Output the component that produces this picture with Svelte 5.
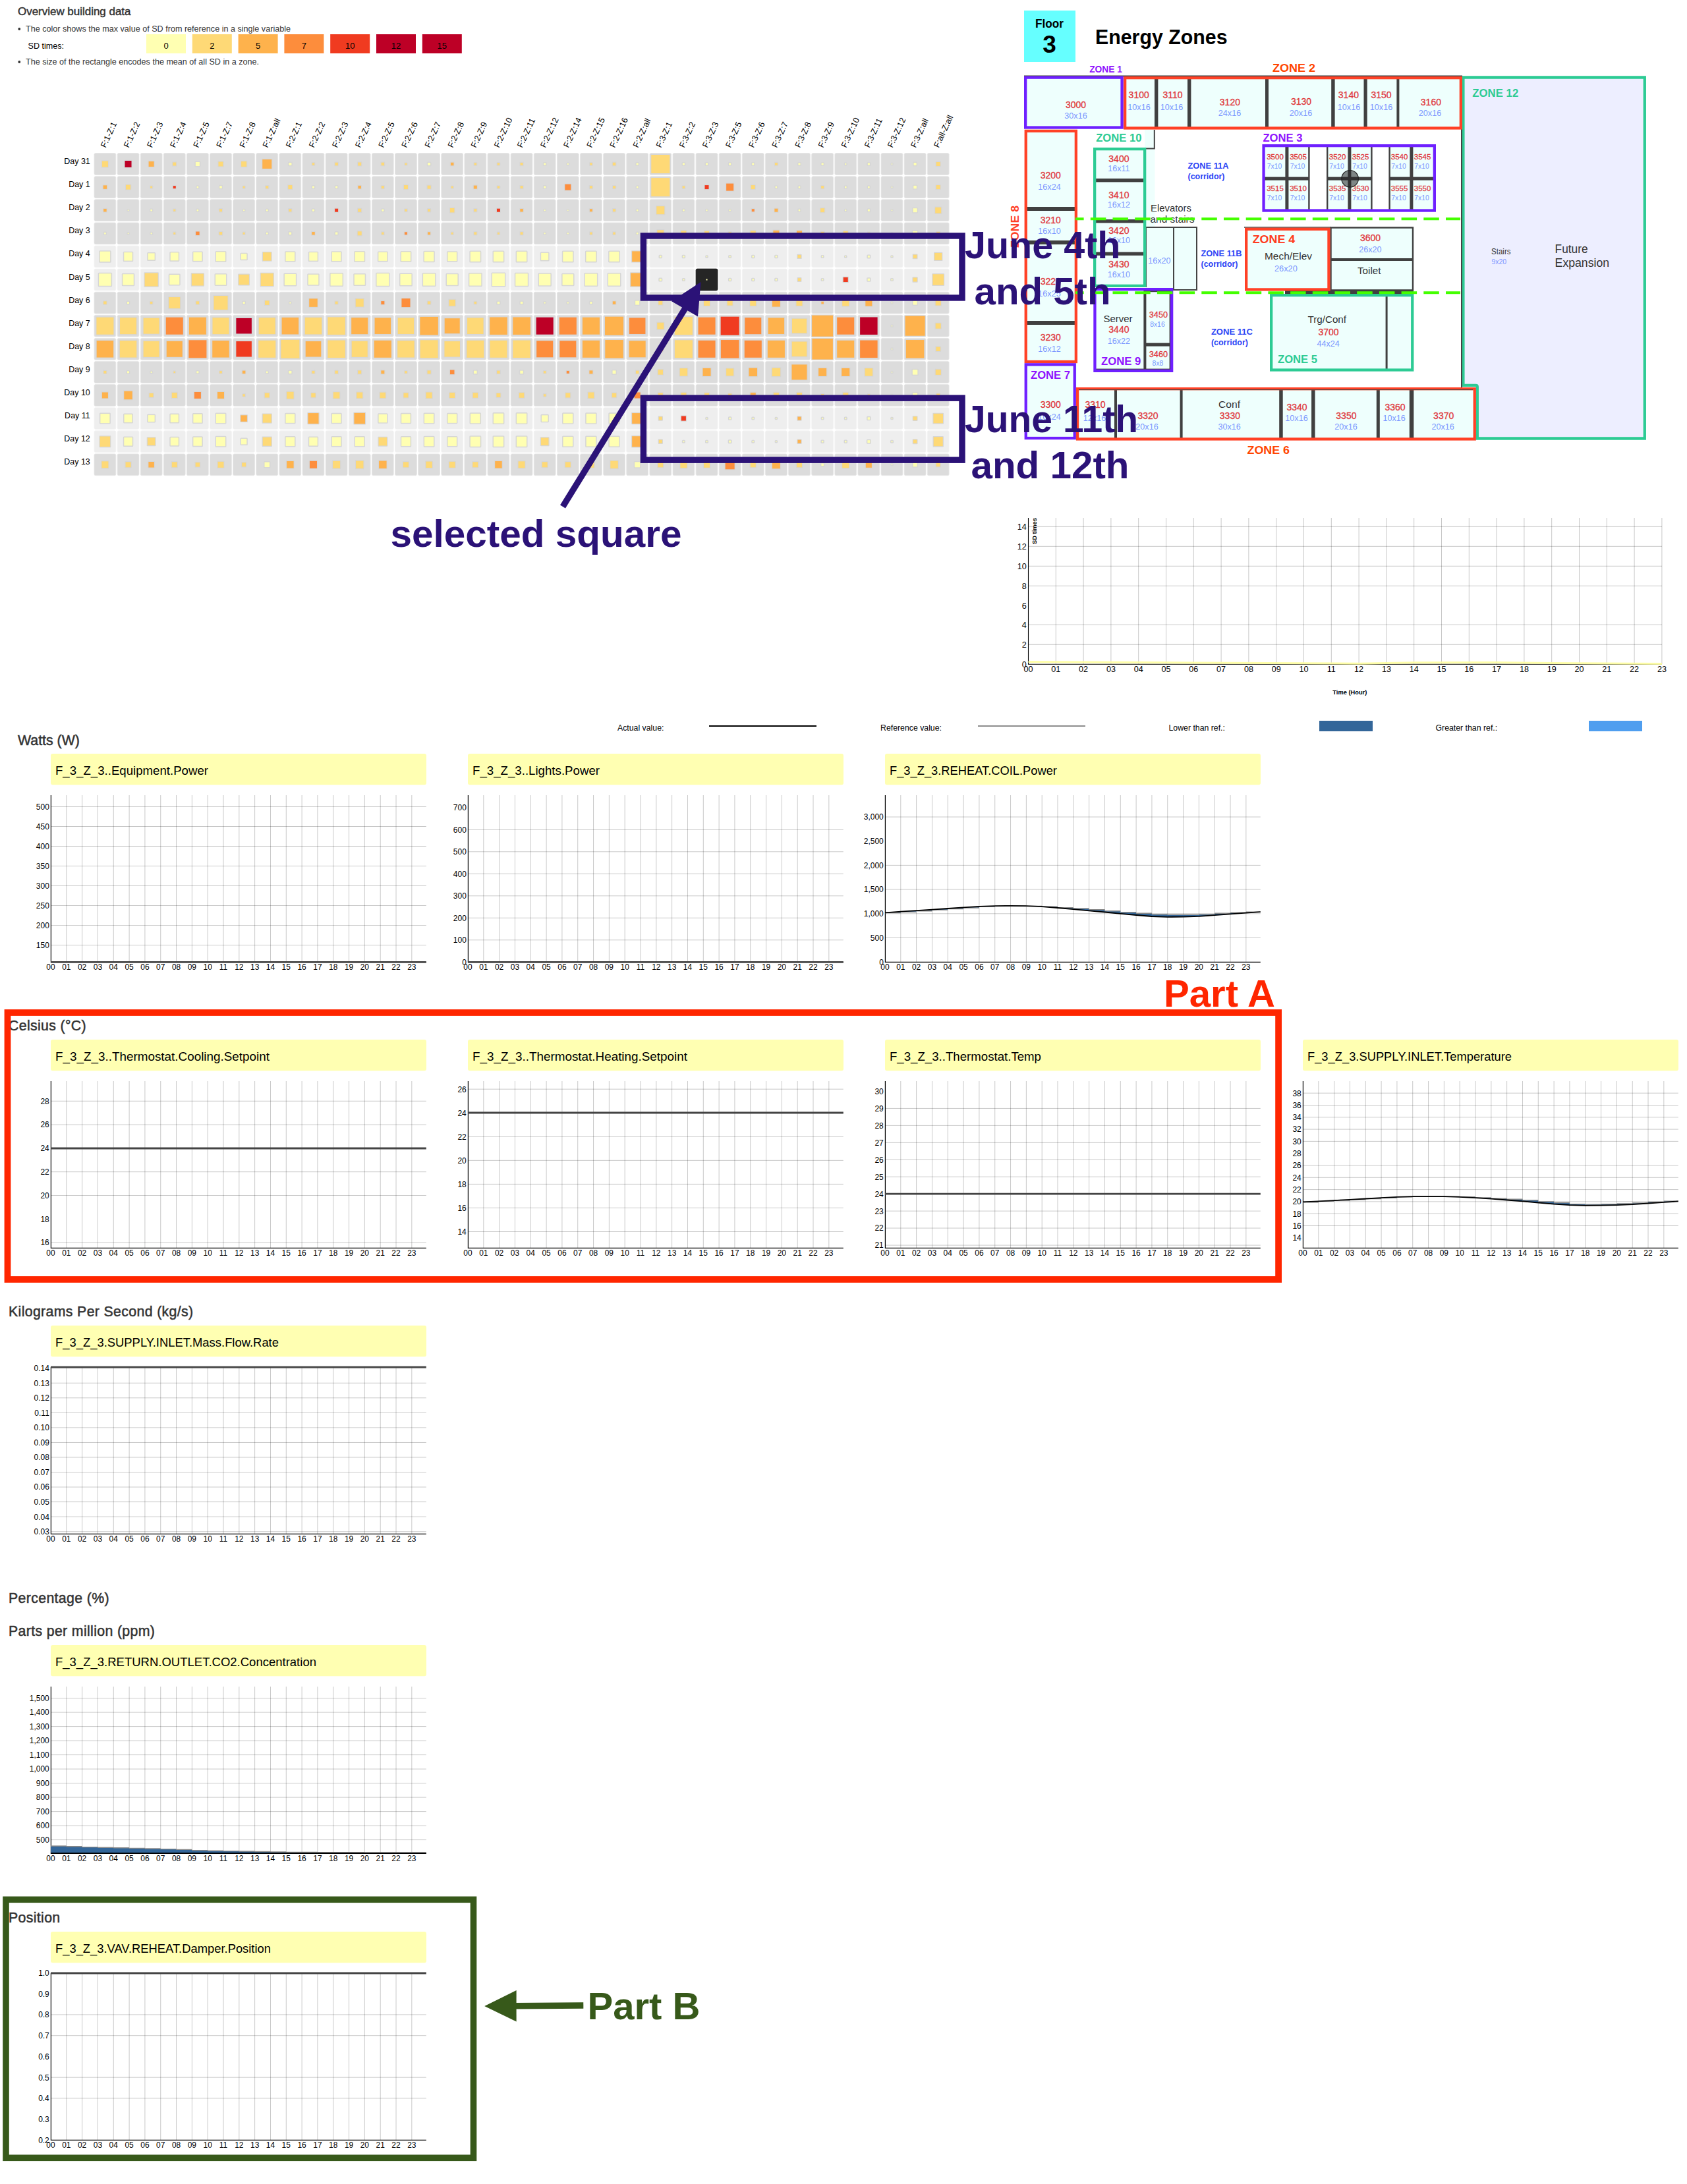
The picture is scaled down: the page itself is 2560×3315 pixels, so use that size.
<script>
  // Colour scale for SD values, lightest to darkest.
  const scale = ['#ffffb2', '#fed976', '#feb24c', '#fd8d3c', '#f03b20', '#bd0026', '#bd0026'];
  const scaleLabels = ['0', '2', '5', '7', '10', '12', '15'];

  const zones = [
    ...['1', '2', '3', '4', '5', '7', '8', 'all'].map((z) => `F:1-Z:${z}`),
    ...['1', '2', '3', '4', '5', '6', '7', '8', '9', '10', '11', '12', '14', '15', '16', 'all'].map((z) => `F:2-Z:${z}`),
    ...['1', '2', '3', '5', '6', '7', '8', '9', '10', '11', '12', 'all'].map((z) => `F:3-Z:${z}`),
    'F:all-Z:all'
  ];

  // Each entry is size:colourIndex, one per zone.
  const days = [
    ['Day 31', '9:1 10:5 8:2 5:1 6:0 7:1 8:1 14:2 4:0 3.5:1 4.5:1 5:1 4.5:1 3:1 4:0 4.5:2 3.5:1 3.5:1 4:1 3:0 2:0 3.5:1 4.5:1 3:0 28:1 3:0 3:0 3:0 3:0 4:1 3:0 3:0 2:0 3:0 1.5:0 4:0 6:1'],
    ['Day 1', '5.5:2 7:1 3:1 4:4 2.5:0 3.5:0 3:1 4:1 6:1 3:0 3:0 4.5:2 4:1 6:1 5:1 3:1 5:2 3.5:1 4:1 3:0 9:3 4:1 4:1 2.5:0 28:1 3.5:1 6:4 11:3 6:1 2.5:0 2.5:0 4:1 2.5:0 2.5:0 1.5:0 4.5:0 6:1'],
    ['Day 2', '4.5:2 1.5:0 2.5:0 3:1 2.5:0 4:1 2:0 2.5:0 4:1 3:0 5:4 5:1 3:0 3.5:1 4:1 6.5:1 4:1 5:4 4.5:2 2:0 1.5:0 4:2 4:1 2.5:0 12:1 2.5:0 2:0 2:0 4:3 5:2 2.5:0 6:1 2:0 3:0 1.5:0 6:0 9:1'],
    ['Day 3', '2.5:0 1.5:0 2:0 3:1 5.5:3 4.5:1 3:1 2.5:0 3.5:0 4.5:2 3.5:0 6:1 3.5:1 4:3 4:2 3:1 4:1 3:1 4:1 2:0 2:0 3.5:1 3.5:1 2.5:0 10:1 8:1 7:1 4:1 8:1 9:2 8:2 5:1 7:1 3:1 1.5:0 7:0 5:1'],
    ['Day 4', '15.5:0 12.5:0 10:0 12:0 13:0 14:0 8.5:0 12.5:1 13.5:0 12.5:0 13.5:0 14:0 13:0 14:0 14.5:0 13.5:0 15:0 15:0 15:0 11:0 15:0 15:0 15:0 16:2 2.5:0 2.5:0 1.5:0 2:0 2.5:0 2.5:0 5:1 2:0 1.5:0 3:0 1.5:0 5.5:1 11:1'],
    ['Day 5', '18.5:0 16.5:0 20:1 15:0 18:1 16:0 15.5:1 19:1 17:0 15.5:0 18:0 16:0 18.5:0 17:0 18:0 16.5:0 18:0 19:0 18.5:0 17.5:0 16.5:0 18:0 18:0 20:2 3:0 2:0 2:0 2.5:0 2.5:0 2.5:0 4.5:1 2:0 7:4 3.5:0 2:0 6:1 16.5:1'],
    ['Day 6', '4.5:1 3:0 3.5:1 17:1 4.5:1 21:1 3:0 6.5:1 2:0 12.5:2 4:1 12:1 5:3 13:3 4.5:1 9.5:1 3.5:1 3.5:0 3.5:0 2:0 2:0 3:0 4.5:2 6:0 6:1 6:1 9:1 8:1 9:1 12:2 9:1 3.5:2 10:1 10:2 1.5:0 6:0 8:1'],
    ['Day 7', '26:1 25:1 24:1 26:3 26:2 25:1 23.5:5 25:1 25.5:2 25.5:1 26.5:1 25:2 24.5:2 24.5:1 27.5:2 23:2 24.5:1 26.5:2 26.5:2 26:5 26:3 26:2 28:2 24.5:3 10:1 27:1 26:3 28:4 25:3 24.5:2 22:1 32:2 26:3 26.5:5 1.5:0 30:2 8:1'],
    ['Day 8', '25.5:2 25.5:1 24:1 24:2 27:3 25.5:2 23.5:4 26:1 28:1 23.5:2 26.5:1 24:1 26:2 25.5:1 27:1 23.5:1 26:1 26:1 26.5:1 25:3 25:3 26:2 27.5:2 25:2 7:2 27:1 26:3 27.5:3 26:3 26:2 22.5:1 31.5:2 26:2 26.5:3 1.5:0 27.5:2 6.5:1'],
    ['Day 9', '4:1 3:0 2:0 2.5:1 3:0 3.5:1 4.5:2 2.5:0 4:0 4:1 4.5:1 5:1 5:2 3.5:1 5:1 6.5:3 4.5:0 4.5:1 4.5:0 3.5:1 4:3 5:2 5:0 4.5:1 7.5:1 11.5:1 12:2 11:1 12.5:2 12.5:1 23:2 12:2 12:2 11.5:1 1.5:0 7.5:0 8:1'],
    ['Day 10', '9:2 12.5:2 6:1 8:1 10:3 10:2 3.5:1 7:1 10.5:1 6.5:1 9.5:1 9:1 8.5:1 7:1 9:1 8:1 7.5:1 6:1 7.5:1 3.5:1 7:1 9:1 6.5:1 9:3 7:1 8:1 7:1 5:1 8:2 8:1 8:1 4:1 8:1 3:1 1.5:0 7:0 5:1'],
    ['Day 11', '14:0 12:0 10:0 12:0 13:0 14:0 9.5:2 13:1 13.5:0 16:2 13.5:0 16.5:2 12.5:0 13.5:0 14:0 13.5:0 14.5:0 15:0 15:0 9.5:0 14.5:0 14.5:0 14.5:0 16:2 5:1 7:4 1.5:0 2.5:0 2:0 1.5:0 5:2 2:0 2:0 3.5:0 1.5:0 5.5:1 14.5:1'],
    ['Day 12', '15.5:1 12.5:0 11.5:1 12:0 13:0 14:0 8.5:0 13:1 13.5:0 12.5:0 13.5:0 13.5:0 12.5:1 13.5:0 14:0 13.5:0 15:0 15:0 15:0 11.5:1 14.5:0 14.5:0 14.5:0 16:2 5:1 2:0 2:0 3:0 2:0 1.5:0 5:2 2.5:0 2.5:0 4:0 2:0 5.5:1 14:1'],
    ['Day 13', '10:1 8:1 8.5:2 8:1 6.5:1 9:1 6:1 7.5:0 10.5:2 11:3 11:1 11.5:1 11.5:2 8:1 9.5:1 9:1 8:1 10.5:2 10:1 8:1 8:1 9:1 11.5:1 8:0 8:1 10:1 9:1 14:3 8:1 12:2 8:1 3.5:0 10:1 9:2 1.5:0 6:0 6:1']
  ].map(([name, row]) => ({
    name,
    cells: row.split(' ').map((c) => {
      const [size, color] = c.split(':');
      return { size: +size, color: scale[+color] };
    })
  }));
  const weekend = [4, 5, 11, 12];
  const cx = (i) => 159.4 + i * 35.12;
  const cy = (i) => 249 + i * 35.1;

  // Floor plan: rooms as [number, x, y, size, x, y]
  const rooms = [
    ['3000', 1632.5, 164.3, '30x16', 1632.5, 180.3], ['3100', 1728.2, 149, '10x16', 1728.5, 167.3],
    ['3110', 1779.6, 149, '10x16', 1778, 167.3], ['3120', 1866.4, 160, '24x16', 1866, 176],
    ['3130', 1974.6, 159.4, '20x16', 1974, 176], ['3140', 2046.4, 149, '10x16', 2047, 167.3],
    ['3150', 2096, 149, '10x16', 2096, 167.3], ['3160', 2171.4, 160, '20x16', 2170, 176],
    ['3200', 1594.3, 270.7, '16x24', 1592.5, 287.7], ['3210', 1594.3, 338.7, '16x10', 1592.5, 355],
    ['3220', 1594.3, 432.3, '16x25', 1592.5, 450], ['3230', 1594.3, 516.7, '16x12', 1592.5, 533.7],
    ['3300', 1594.3, 618.7, '16x24', 1592.5, 637], ['3400', 1697.9, 245.7, '16x11', 1697.9, 260],
    ['3410', 1697.9, 301, '16x12', 1697.9, 315.3], ['3420', 1697.9, 355, '16x10', 1697.9, 369.3],
    ['3430', 1697.9, 405.7, '16x10', 1697.9, 420.7], ['3440', 1697.9, 504.7, '16x22', 1697.9, 521.7],
    ['3600', 2079.6, 366.3, '26x20', 2079.3, 383.3], ['3700', 2016, 509.3, '44x24', 2015.7, 525.7],
    ['3310', 1662, 619, '12x16', 1661, 638.7], ['3320', 1742, 635.7, '20x16', 1740.5, 652.3],
    ['3330', 1866.4, 636, '30x16', 1865.7, 652.3], ['3340', 1968, 623.3, '10x16', 1967.5, 639.3],
    ['3350', 2042.9, 635.5, '20x16', 2042.5, 652.3], ['3360', 2117, 623.3, '10x16', 2115.7, 639.3],
    ['3370', 2190.7, 636, '20x16', 2189.6, 652]
  ];
  const desks = [
    [1935, '3500', '3515'], [1970, '3505', '3510'], [2029.6, '3520', '3535'],
    [2064.6, '3525', '3530'], [2123.6, '3540', '3555'], [2158.6, '3545', '3550']
  ];
  // Walls as x, y, width, height
  const walls = [
    [1752, 119, 5.4, 75], [1802, 119, 5.4, 75], [1920, 119, 5, 75], [2020.2, 119, 5.4, 75], [2069.5, 119, 5.2, 75], [2119.4, 119, 4, 75],
    [1558, 314, 73, 6], [1558, 365, 73, 6], [1558, 487, 73, 6],
    [1662, 271, 74, 5.4], [1662, 333, 74, 5.4], [1662, 382.6, 74, 5.2],
    [1735.4, 440, 4, 122], [1739, 440.6, 37, 2.6], [1739, 520.6, 37, 5], [1774.6, 443, 1.5, 118], [1662, 559.6, 114, 1.5],
    [1950.4, 221, 5, 98], [1985.2, 221, 2.4, 98], [2013, 221, 2.4, 98], [2045.4, 221, 5, 98], [2080.2, 221, 2.4, 98],
    [2107.4, 221, 2.4, 98], [2139.4, 221, 5, 98],
    [1919, 268.6, 68, 5], [2014, 268.6, 68, 5], [2108, 268.6, 67, 5],
    [2102.6, 448, 3, 113],
    [1691, 591, 4, 74], [1790.6, 591, 4, 74], [1941.2, 591, 5.5, 74], [1990.4, 591, 5, 74], [2088.8, 591, 5, 74], [2138.8, 591, 6.5, 74],
    [1990.2, 591, 5, 74]
  ];
  // Outlined zones as x, y, width, height, colour (outer edges)
  const red = '#ff4126', violet = '#6f20ff', green = '#2dcb94';
  const outlines = [
    [1659, 224, 80.3, 212, green], [1915.4, 219, 263.6, 102.7, violet],
    [1889, 345.6, 129.6, 96, red], [1927, 446, 218.4, 117.7, green],
    [1659.3, 437, 121, 128, violet], [1554.6, 196.7, 80.4, 354.5, red], [1554.6, 551.2, 78.3, 116, violet],
    [1705, 116, 514, 80.6, red], [1554, 115.5, 150.7, 80.2, violet], [1632.9, 588, 607, 80.6, red]
  ];
  // label, x, baseline, width, font size, colour
  const zoneLabels = [
    ['ZONE 1', 1653.2, 110, 49.7, 14.5, '#9013fe'], ['ZONE 2', 1931, 109.3, 65, 17, '#ff4500'],
    ['ZONE 3', 1916.4, 215, 60, 16.6, '#9013fe'], ['ZONE 4', 1900.7, 369, 64.5, 17, '#ff3b20'],
    ['ZONE 5', 1939, 551, 60, 16.6, green], ['ZONE 6', 1892.5, 688.7, 64.5, 17, '#ff4500'],
    ['ZONE 7', 1564, 575, 60, 16.6, '#9013fe'], ['ZONE 9', 1671, 553.7, 60.4, 16.6, '#9013fe'],
    ['ZONE 10', 1663.2, 215, 69.3, 16.6, green], ['ZONE 12', 2234.3, 146.7, 70, 16.6, green],
    ['ZONE 11A', 1802.5, 256.3, 62, 12.7, '#2b44f5'], ['(corridor)', 1802.5, 272, 56, 12.7, '#2b44f5'],
    ['ZONE 11B', 1822.5, 388.7, 62, 12.7, '#2b44f5'], ['(corridor)', 1822.5, 404.7, 56, 12.7, '#2b44f5'],
    ['ZONE 11C', 1837.9, 508.3, 63, 12.7, '#2b44f5'], ['(corridor)', 1837.9, 524.3, 56, 12.7, '#2b44f5']
  ];
  const names = [
    ['Elevators', 1746, 320.7, 62, 15], ['and stairs', 1745.5, 338, 67, 15], ['Server', 1674.6, 488.7, 44, 15],
    ['Mech/Elev', 1919, 394.3, 72, 15], ['Toilet', 2060, 415.7, 35.5, 15], ['Trg/Conf', 1984.5, 490, 58.5, 15],
    ['Conf', 1849, 619.3, 33, 15], ['Stairs', 2263, 386.3, 29.5, 12], ['Future', 2359.6, 383.5, 50, 18], ['Expansion', 2359.6, 405.2, 82.5, 18]
  ];

  const hours = Array.from({ length: 24 }, (_, i) => String(i).padStart(2, '0'));
  const sdTicks = [[14, 799.3, 1], [12, 829.3, 1], [10, 859.3, 1], [8, 889.3, 1], [6, 919, 0], [4, 948.3, 1], [2, 978.3, 1], [0, 1008.3, 0]];
  const sdX = (h) => 1560.5 + h * 41.8;

  const hx = (h) => 50 + h * 23.82;
  // Builds tick marks from a first label, its y, and a fixed step.
  const ticks = (labels, y0, step, skip = []) =>
    labels.split(' ').map((label, i) => ({ label, y: y0 + i * step, line: !skip.includes(label) }));

  const reheatActual = [469, 466, 463, 460, 457, 454, 451, 449.6, 449, 449.7, 451.5, 455, 459, 463.5, 467.5, 472, 476, 480, 481.5, 481.2, 479.5, 476.5, 473, 469.5, 467].map((v) => v / 1.912 - 4);
  const reheatRef = [469.5, 467, 464, 461, 458, 455, 451.5, 450, 449.4, 450, 451.5, 454.5, 457, 460.5, 464, 468, 471, 474, 475, 475, 474, 471, 469, 467].map((v) => v / 1.912 - 4);
  const supplyActual = [1309, 1307, 1304.5, 1302, 1299.5, 1297, 1294.5, 1293.3, 1293, 1293.2, 1294.5, 1297, 1300, 1303.5, 1307, 1311, 1315, 1318, 1319.2, 1319, 1318, 1316, 1313, 1310, 1307].map((v) => v / 1.912 - 438.2);
  const supplyRef = [1309.5, 1307, 1304.5, 1302, 1299.5, 1297, 1294.5, 1293.5, 1293, 1293.2, 1294.5, 1296.5, 1299, 1301, 1304, 1308, 1311, 1315, 1316, 1315.5, 1314, 1312, 1309, 1306.5].map((v) => v / 1.912 - 438.2);
  const co2Ref = [305, 305.8, 306.6, 307.2, 307.8, 308.4, 309, 309.6, 310.4, 311.6, 312.2, 312.6, 313, 313.5, 314, 314.4, 314.5, 314.6, 314.7, 314.8, 314.9, 315, 315, 315];
  const co2Actual = Array(25).fill(315.9);

  const endX = (h) => hx(Math.min(h, 23.92));
  const linePath = (v) => 'M' + v.map((y, h) => `${endX(h)} ${y.toFixed(1)}`).join('L');
  const stepPath = (v) => v.map((y, h) => `M${endX(h)} ${y.toFixed(1)}H${endX(h + 1)}`).join('');
  const areaPath = (a, r) =>
    'M' + r.map((y, h) => `${endX(h)} ${y}L${endX(h + 1)} ${y}`).join('L') + 'L' + a.map((y, h) => `${endX(h)} ${y}`).reverse().join('L') + 'Z';

  const sections = [
    { unit: 'Watts (W)', first: true, charts: [
      { name: 'F_3_Z_3..Equipment.Power', w: 232, ticks: ticks('500 450 400 350 300 250 200 150', 80.5, 30), flat: 316.3 },
      { name: 'F_3_Z_3..Lights.Power', w: 193, ticks: ticks('700 600 500 400 300 200 100 0', 81.8, 33.5, ['700', '0']), flat: 316.3 },
      { name: 'F_3_Z_3.REHEAT.COIL.Power', w: 254, ticks: ticks('3,000 2,500 2,000 1,500 1,000 500 0', 96, 36.7, ['2,500', '0']), actual: reheatActual, ref: reheatRef }
    ] },
    { unit: 'Celsius (°C)', charts: [
      { name: 'F_3_Z_3..Thermostat.Cooling.Setpoint', w: 325, ticks: ticks('28 26 24 22 20 18 16', 93.3, 35.8, ['18']), flat: 165 },
      { name: 'F_3_Z_3..Thermostat.Heating.Setpoint', w: 326, ticks: ticks('26 24 22 20 18 16 14', 75.2, 36.05), flat: 111 },
      { name: 'F_3_Z_3..Thermostat.Temp', w: 230, ticks: ticks('30 29 28 27 26 25 24 23 22 21', 78.5, 25.95, ['30']), flat: 234.2 },
      { name: 'F_3_Z_3.SUPPLY.INLET.Temperature', w: 310, ticks: ticks('38 36 34 32 30 28 26 24 22 20 18 16 14', 81.2, 18.3, ['28', '14']), actual: supplyActual, ref: supplyRef }
    ] },
    { unit: 'Kilograms Per Second (kg/s)', charts: [
      { name: 'F_3_Z_3.SUPPLY.INLET.Mass.Flow.Rate', w: 339, ticks: ticks('0.14 0.13 0.12 0.11 0.10 0.09 0.08 0.07 0.06 0.05 0.04 0.03', 64.7, 22.55), flat: 63.2 }
    ] },
    { unit: 'Percentage (%)', charts: [] },
    { unit: 'Parts per million (ppm)', charts: [
      { name: 'F_3_Z_3.RETURN.OUTLET.CO2.Concentration', w: 396, ticks: ticks('1,500 1,400 1,300 1,200 1,100 1,000 900 800 700 600 500', 80.6, 21.5), actual: co2Actual, ref: co2Ref }
    ] },
    { unit: 'Position', charts: [
      { name: 'F_3_Z_3.VAV.REHEAT.Damper.Position', w: 327, ticks: ticks('1.0 0.9 0.8 0.7 0.6 0.5 0.4 0.3 0.2', 62.5, 31.73, ['0.9', '0.6', '0.3', '0.2']), flat: 63 }
    ] }
  ];
</script>

<main class="page">
  <div class="top">
    <svg class="overview" viewBox="0 0 1500 1090">
      <text class="head" x="27" y="23.3" font-size="16.5" textLength="171.5" lengthAdjust="spacingAndGlyphs">Overview building data</text>
      <circle cx="29.3" cy="44" r="1.9" fill="#333" />
      <text x="39" y="48" font-size="13" fill="#333" textLength="402" lengthAdjust="spacingAndGlyphs">The color shows the max value of SD from reference in a single variable</text>
      <text x="42.5" y="74" font-size="13.5" textLength="54.5" lengthAdjust="spacingAndGlyphs">SD times:</text>
      {#each scale as color, i}
        <rect x={222 + i * 69.8} y="52" width="60" height="29" fill={color} />
        <text x={252 + i * 69.8} y="74" font-size="13" text-anchor="middle">{scaleLabels[i]}</text>
      {/each}
      <circle cx="29.3" cy="94" r="1.9" fill="#333" />
      <text x="39" y="98" font-size="13" fill="#333" textLength="354" lengthAdjust="spacingAndGlyphs">The size of the rectangle encodes the mean of all SD in a zone.</text>

      {#each zones as zone, i}
        <text font-size="12.8" transform="translate({cx(i) + 0.8} 225) rotate(-65)">{zone}</text>
      {/each}
      {#each days as day, r}
        <text x="136.8" y={cy(r)} font-size="12.5" text-anchor="end">{day.name}</text>
        {#each day.cells as cell, c}
          {@const picked = r === 5 && c === 26}
          <rect x={cx(c) - 16.4} y={cy(r) - 16.4} width="32.8" height="32.8" rx="2"
            fill={picked ? '#252525' : weekend.includes(r) ? '#eeeeee' : '#dcdcdc'}
            stroke={picked ? '#111' : weekend.includes(r) ? '#f3f3f3' : '#e6e6e6'} stroke-width="0.8" />
        {/each}
      {/each}
      {#each days as day, r}
        {#each day.cells as cell, c}
          <rect x={cx(c) - cell.size / 2} y={cy(r) - cell.size / 2} width={cell.size} height={cell.size}
            fill={cell.color} stroke={r === 5 && c === 26 ? '#252525' : '#d6d6d6'}
            stroke-width={cell.color === '#ffffb2' ? 3 : 2.4} stroke-linejoin="round" paint-order="stroke" />
        {/each}
      {/each}
    </svg>

    <svg class="plan" viewBox="1500 0 1060 1090">
      <rect x="1554" y="16" width="78" height="78" fill="#66ffff" />
      <text class="b" x="1571" y="41.5" font-size="18" textLength="43" lengthAdjust="spacingAndGlyphs">Floor</text>
      <text class="b" x="1592.5" y="79.5" font-size="37" text-anchor="middle">3</text>
      <text class="b" x="1662" y="66.8" font-size="30.5" textLength="200.5" lengthAdjust="spacingAndGlyphs">Energy Zones</text>

      <g fill="#eefffd">
        <rect x="1554" y="116" width="665" height="80" />
        <rect x="1555" y="196" width="79" height="471" />
        <rect x="1659" y="224" width="80" height="212" />
        <rect x="1737" y="197" width="15.5" height="147" />
        <rect x="1739" y="345" width="77" height="95" />
        <rect x="1660" y="438" width="120" height="126" />
        <rect x="1917" y="221" width="70" height="98" />
        <rect x="2014" y="221" width="68" height="98" />
        <rect x="2108" y="221" width="68" height="98" />
        <rect x="1889" y="345" width="256" height="96" />
        <rect x="1927" y="446" width="218" height="117" />
        <rect x="1633" y="588" width="607" height="80" />
      </g>
      <path d="M2220.4 117.5H2495.8V665.5H2241.8V587Q2241.8 584.8 2239.6 584.8H2220.4Z" fill="#edeeff" stroke={green} stroke-width="4.3" />
      <path d="M1554 115.5H2219M2218 196V588M1751.8 197V225.6H1739M1739 345H1816V440H1781V345M1739 345V436" fill="none" stroke="#444" stroke-width="2" />
      <path d="M2019.5 345.5H2144V440.5H2019.5Z" fill="none" stroke="#404040" stroke-width="2.4" />
      <path d="M2019 394H2144" stroke="#404040" stroke-width="4" />
      <path d="M1888 345H2020" stroke="#404040" stroke-width="1.6" />
      <rect x="1950" y="440" width="195" height="6" fill="#404040" />
      {#each walls as [x, y, w, h]}
        <rect {x} {y} width={w} height={h} fill="#404040" />
      {/each}
      {#each outlines as [x, y, w, h, color]}
        <rect x={x + 2.15} y={y + 2.15} width={w - 4.3} height={h - 4.3} fill="none" stroke={color} stroke-width="4.3" />
      {/each}
      <path d="M1637 591.6H2235" stroke="#444" stroke-width="1" />

      {#each rooms as [num, x, y, dim, dx, dy]}
        <text {x} {y} class="num" font-size="14" text-anchor="middle">{num}</text>
        <text x={dx} y={dy} class="dim" font-size="12.6" text-anchor="middle">{dim}</text>
      {/each}
      {#each desks as [x, a, b]}
        <text {x} y="242.2" class="num" font-size="11.5" text-anchor="middle">{a}</text>
        <text x={x - 1} y="256.4" class="dim" font-size="10.4" text-anchor="middle">7x10</text>
        <text {x} y="290" class="num" font-size="11.5" text-anchor="middle">{b}</text>
        <text x={x - 1} y="304.2" class="dim" font-size="10.4" text-anchor="middle">7x10</text>
      {/each}
      <text x="1757.9" y="482.2" class="num" font-size="12.7" text-anchor="middle">3450</text>
      <text x="1756.4" y="496.4" class="dim" font-size="10.4" text-anchor="middle">8x16</text>
      <text x="1757.9" y="541.8" class="num" font-size="12.7" text-anchor="middle">3460</text>
      <text x="1757" y="554.8" class="dim" font-size="10.4" text-anchor="middle">8x8</text>
      <text x="1759.3" y="399.7" class="dim" font-size="12.6" text-anchor="middle">16x20</text>
      <text x="1951.4" y="412.4" class="dim" font-size="12.8" text-anchor="middle">26x20</text>
      <text x="2263.5" y="401.2" class="dim" font-size="10.4">9x20</text>
      {#each names as [label, x, y, w, size]}
        <text {x} {y} fill="#333" font-size={size} textLength={w} lengthAdjust="spacingAndGlyphs">{label}</text>
      {/each}
      {#each zoneLabels as [label, x, y, w, size, color]}
        <text class="b" {x} {y} font-size={size} fill={color} textLength={w} lengthAdjust="spacingAndGlyphs">{label}</text>
      {/each}
      <text class="b" font-size="17" fill={red} textLength="64" lengthAdjust="spacingAndGlyphs" transform="translate(1546 376) rotate(-90)">ZONE 8</text>
      <path d="M1632 332.3H2216M1632 444.3H2216" stroke="#44ff00" stroke-width="4" stroke-dasharray="23.5 10.2" stroke-dashoffset="10.9" />
      <circle cx="2048.6" cy="271.3" r="12.8" fill="#222" fill-opacity="0.55" stroke="#222" stroke-width="1.2" />

      {#each sdTicks as [label, y, line]}
        {#if line}<path class="grid" d="M1560.5 {y}H2522" />{/if}
        <text x="1557.8" y={y + 4.6} font-size="12.6" text-anchor="end">{label}</text>
      {/each}
      {#each hours as h, i}
        {#if i > 0}<path class="grid" d="M{sdX(i)} 786V1008" />{/if}
        <text x={sdX(i)} y="1020.2" font-size="12.6" text-anchor="middle">{h}</text>
      {/each}
      <path d="M1560.5 786V1008.3H2522" fill="none" stroke="#000" stroke-width="1.1" />
      <path d="M1560.5 1004.6L1811 1006L2062 1007.2L2146 1005.8L2271 1005.6L2355 1006.6L2522 1007.4" fill="none" stroke="#ffffa0" stroke-opacity="0.9" stroke-width="3" />
      <text class="b" font-size="9.3" textLength="40" lengthAdjust="spacingAndGlyphs" transform="translate(1573.4 826) rotate(-90)">SD times</text>
      <text class="b" x="2022.3" y="1053.6" font-size="9.6" textLength="52" lengthAdjust="spacingAndGlyphs">Time (Hour)</text>
    </svg>
  </div>

  <div class="legend">
    <div class="item actual"><span>Actual value:</span><i></i></div>
    <div class="item reference"><span>Reference value:</span><i></i></div>
    <div class="item lower"><span>Lower than ref.:</span><i></i></div>
    <div class="item greater"><span>Greater than ref.:</span><i></i></div>
  </div>

  {#each sections as section}
    <section class:first={section.first}>
      <h2>{section.unit}</h2>
      {#if section.charts.length}
        <div class="charts">
          {#each section.charts as chart}
            <svg class="chart" viewBox="0 0 633.2 340">
              <rect x="50" y="0" width="570" height="47.3" rx="3" fill="#ffffb2" />
              <text x="57" y="32" font-size="17.8" textLength={chart.w} lengthAdjust="spacingAndGlyphs">{chart.name}</text>
              {#each chart.ticks as t}
                {#if t.line}<path class="grid" d="M50 {t.y}H619.8" />{/if}
                <text x="47.8" y={t.y + 4.4} font-size="12" text-anchor="end">{t.label}</text>
              {/each}
              {#each hours as h, i}
                {#if i > 0}<path class="grid" d="M{hx(i)} 63V316" />{/if}
                <text x={hx(i)} y="328" font-size="12" text-anchor="middle">{h}</text>
              {/each}
              <path d="M50.4 63V316.3H619.8" fill="none" stroke="#000" stroke-width="1.2" />
              {#if chart.flat}
                <path d="M50 {chart.flat}H619.8" stroke="#444" stroke-width="2.8" />
              {:else}
                <path d={areaPath(chart.actual, chart.ref)} fill="#336699" />
                <path d={stepPath(chart.ref)} fill="none" stroke="#888" stroke-width="1.4" />
                <path d={linePath(chart.actual)} fill="none" stroke="#000" stroke-width="1.8" />
              {/if}
            </svg>
          {/each}
        </div>
      {/if}
    </section>
  {/each}

  <svg class="notes" viewBox="0 0 2560 3315">
    <g fill="none" stroke="#2b1277" stroke-width="9.4">
      <rect x="976.4" y="358" width="483.6" height="94" />
      <rect x="976.4" y="604.2" width="483.6" height="94" />
      <path d="M854 769L1041 466" />
    </g>
    <path d="M1063.5 428L1019 457.3L1059 480.5Z" fill="#2b1277" />
    <g class="b" fill="#2b1277" font-size="57">
      <text x="1464" y="392" textLength="236.5" lengthAdjust="spacingAndGlyphs">June 4th</text>
      <text x="1478.5" y="462" textLength="207" lengthAdjust="spacingAndGlyphs">and 5th</text>
      <text x="1464" y="655.7" textLength="263" lengthAdjust="spacingAndGlyphs">June 11th</text>
      <text x="1473.5" y="725.5" textLength="240" lengthAdjust="spacingAndGlyphs">and 12th</text>
      <text x="592.5" y="830" textLength="442" lengthAdjust="spacingAndGlyphs">selected square</text>
    </g>
    <rect x="11.5" y="1537" width="1928.6" height="405" fill="none" stroke="#ff2600" stroke-width="9.8" />
    <text class="b" x="1766" y="1528" font-size="57" fill="#ff2600" textLength="169" lengthAdjust="spacingAndGlyphs">Part A</text>
    <g stroke="#37591a" stroke-width="9.6" fill="none">
      <rect x="9" y="2883.3" width="709.5" height="392" />
      <path d="M780 3044.8L885.3 3044" />
    </g>
    <path d="M735.2 3045L783.6 3020.9V3068.5Z" fill="#37591a" />
    <text class="b" x="891.5" y="3064.6" font-size="57" fill="#37591a" textLength="171" lengthAdjust="spacingAndGlyphs">Part B</text>
  </svg>
</main>

<style>
  :global(body) {
    background: #fff;
  }
  .page {
    position: relative;
    width: 2560px;
    height: 3315px;
    overflow: hidden;
    font-family: 'Liberation Sans', Arial, sans-serif;
    color: #000;
  }
  svg {
    display: block;
    flex: none;
    overflow: visible;
  }
  .top {
    display: flex;
    height: 1090px;
  }
  .overview {
    width: 1500px;
    height: 1090px;
  }
  .plan {
    width: 1060px;
    height: 1090px;
  }
  .head {
    fill: #333;
    stroke: #333;
    stroke-width: 0.45px;
  }
  .b {
    font-weight: 700;
  }
  .num {
    fill: #e0393e;
    stroke: #e0393e;
    stroke-width: 0.3px;
  }
  .dim {
    fill: #7a96ff;
  }
  .grid {
    stroke: #000;
    stroke-opacity: 0.22;
    stroke-width: 1;
    fill: none;
  }
  .legend {
    display: flex;
    height: 25px;
    padding-left: 937px;
    font-size: 12.3px;
  }
  .item {
    display: flex;
  }
  .item span {
    line-height: 31px;
    white-space: nowrap;
  }
  .item i {
    margin-top: 4px;
    height: 16px;
    width: 81px;
  }
  .actual { width: 399px; }
  .actual span { width: 138.5px; }
  .reference { width: 437.5px; }
  .reference span { width: 148px; }
  .lower { width: 405px; }
  .lower span { width: 228.5px; }
  .greater span { width: 232.5px; }
  .actual i,
  .reference i {
    margin-top: 11px;
    width: 163px;
    height: 2px;
    background: #000;
  }
  .reference i { background: #8c8c8c; }
  .lower i { background: #336699; }
  .greater i { background: #4f9eef; }
  section {
    display: flex;
    flex-direction: column;
  }
  h2 {
    margin: 0;
    height: 44px;
    padding-left: 13px;
    font-size: 21.3px;
    font-weight: 400;
    line-height: 47px;
    letter-spacing: 0.35px;
    color: #333;
    -webkit-text-stroke: 0.5px #333;
  }
  .first h2 {
    height: 29px;
    padding-left: 27px;
    line-height: 18px;
    letter-spacing: 0;
  }
  section:not(:has(.charts)) {
    height: 50.8px;
  }
  .charts {
    display: flex;
    height: 390.2px;
    padding-left: 27px;
  }
  .chart {
    width: 633.2px;
    height: 340px;
  }
  .notes {
    position: absolute;
    inset: 0;
    width: 2560px;
    height: 3315px;
    pointer-events: none;
  }
</style>
